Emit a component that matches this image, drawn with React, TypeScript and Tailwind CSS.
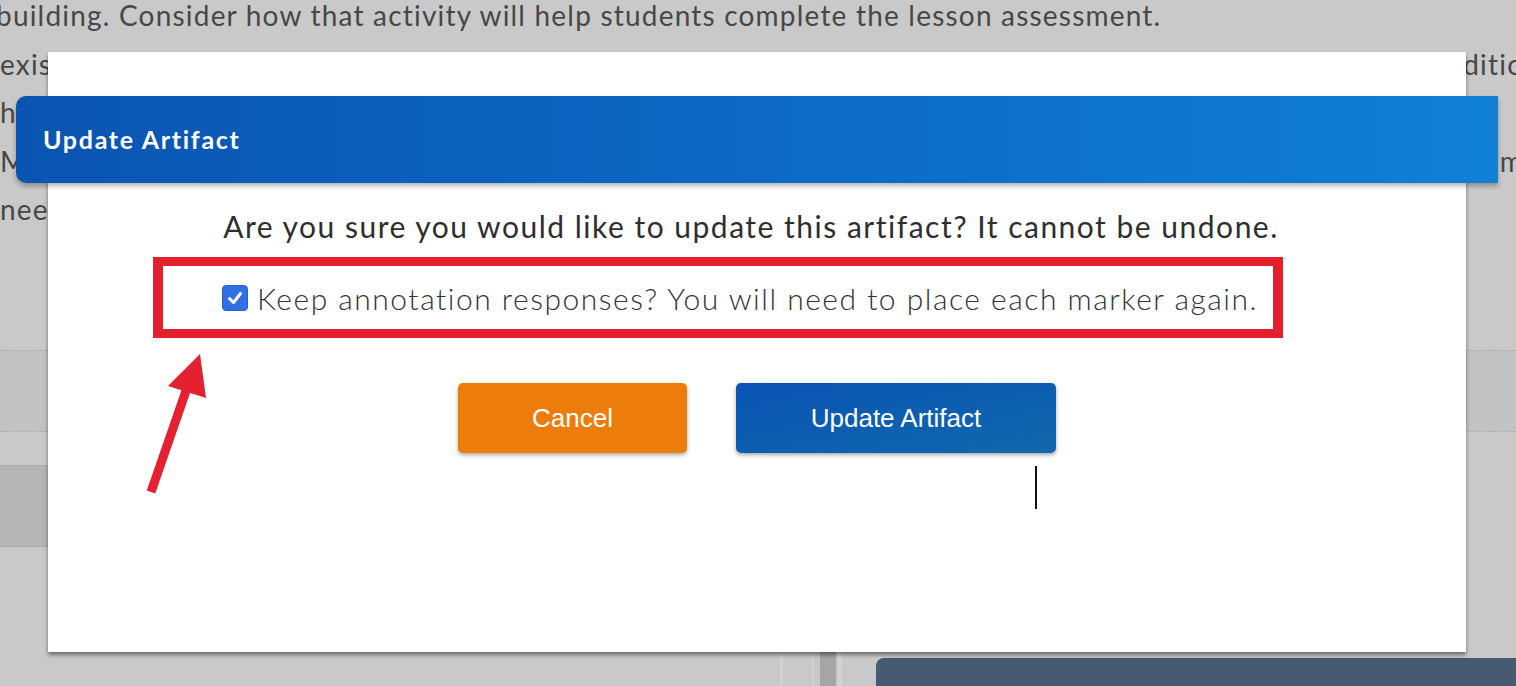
export default function App() {
  return (
    <div className="relative h-[686px] w-[1516px] overflow-hidden bg-[#c9c9c9] font-['Lato',sans-serif]">
      {/* background page */}
      <div className="flex h-full flex-col">
        <div className="h-[350px] overflow-hidden">
          <div className="-mt-[9px] whitespace-nowrap text-[28px] leading-[48.5px] tracking-[1.2px] text-[#474747]">
            <div className="-ml-[4px]">building. Consider how that activity will help students complete the lesson assessment.</div>
            <div className="flex justify-between overflow-hidden">
              <span>existing lessons or activities that can be adapted for this unit. Make sure you</span>
              <span className="-mr-[48px]">additional</span>
            </div>
            <div>help students reach the goals of the lesson.</div>
            <div className="flex justify-between overflow-hidden">
              <span>Make sure the materials you choose are accessible to all students and fit the</span>
              <span className="-mr-[8px]">from</span>
            </div>
            <div>need of the classroom.</div>
          </div>
        </div>
        <div className="h-[82px] border-y border-dashed border-[#b0b0b0] bg-[#c1c2c4]" />
        <div className="flex flex-1">
          <div className="w-[780px]">
            <div className="mt-[33px] h-[82px] border-y border-[#ababab] bg-[#b5b5b5]" />
          </div>
          <div className="w-[3px] bg-[#d2d2d2]" />
          <div className="w-[29px]" />
          <div className="w-[2px] bg-[#d0d0d0]" />
          <div className="w-[6px]" />
          <div className="w-[16px] bg-[#a6a6a6]" />
          <div className="w-[2px]" />
          <div className="w-[4px] bg-[#d3d3d3]" />
          <div className="w-[34px]" />
          <div className="flex flex-1 flex-col pt-[226px]">
            <div className="flex-1 rounded-tl-[8px] bg-[#475a72]" />
          </div>
        </div>
      </div>

      {/* modal */}
      <div className="absolute left-[48px] top-[52px] flex h-[600px] w-[1418px] flex-col bg-white shadow-[0_3px_4px_rgba(0,0,0,0.45)]">
        <div className="-mx-[32px] mt-[44px] flex h-[87px] items-center rounded-l-[10px] bg-gradient-to-r from-[#0b54b2] to-[#1080d5] pl-[27px] shadow-[0_3px_5px_rgba(0,0,0,0.3)]">
          <span className="text-[25px] font-bold tracking-[1.7px] text-white">Update Artifact</span>
        </div>
        <div className="mt-[25px] pr-[12px] text-center text-[30px] leading-[36px] tracking-[1.5px] text-[#2e2e2e]">
          Are you sure you would like to update this artifact? It cannot be undone.
        </div>
        <div className="ml-[105px] mt-[13px] flex h-[81px] w-[1130px] items-center border-x-[10px] border-y-[9px] border-[#e4202e] pl-[59px]">
          <div className="flex h-[26px] w-[26px] shrink-0 items-center justify-center rounded-[4px] border border-[#2a5fc4] bg-[#2f70e6]">
            <svg width="18" height="18" viewBox="0 0 18 18">
              <path d="M3.5 9.5 L7.5 13.5 L14.5 4.5" fill="none" stroke="white" strokeWidth="3" strokeLinecap="round" strokeLinejoin="round" />
            </svg>
          </div>
          <span className="ml-[9px] whitespace-nowrap text-[30px] font-light leading-[36px] tracking-[1.5px] text-[#333]">
            Keep annotation responses? You will need to place each marker again.
          </span>
        </div>
        <div className="mt-[45px] flex justify-center gap-[49px] font-['Liberation_Sans',sans-serif]">
          <button className="flex h-[70px] w-[229px] items-center justify-center rounded-[5px] bg-[#ec7d0b] text-[26px] text-white shadow-[0_2px_4px_rgba(0,0,0,0.35)]">
            Cancel
          </button>
          <button className="flex h-[70px] w-[320px] items-center justify-center rounded-[5px] bg-gradient-to-br from-[#0b53b4] to-[#1268ad] text-[26px] text-white shadow-[0_2px_4px_rgba(0,0,0,0.35)]">
            Update Artifact
          </button>
        </div>
        <div className="absolute left-[987px] top-[414px] h-[43px] w-[2px] bg-[#111]" />
      </div>

      {/* annotation arrow */}
      <svg className="absolute left-0 top-0" width="1516" height="686" viewBox="0 0 1516 686">
        <line x1="187" y1="388" x2="151" y2="492" stroke="#e52030" strokeWidth="9" />
        <polygon points="200,354 168,386 206,398" fill="#e52030" />
      </svg>
    </div>
  );
}
